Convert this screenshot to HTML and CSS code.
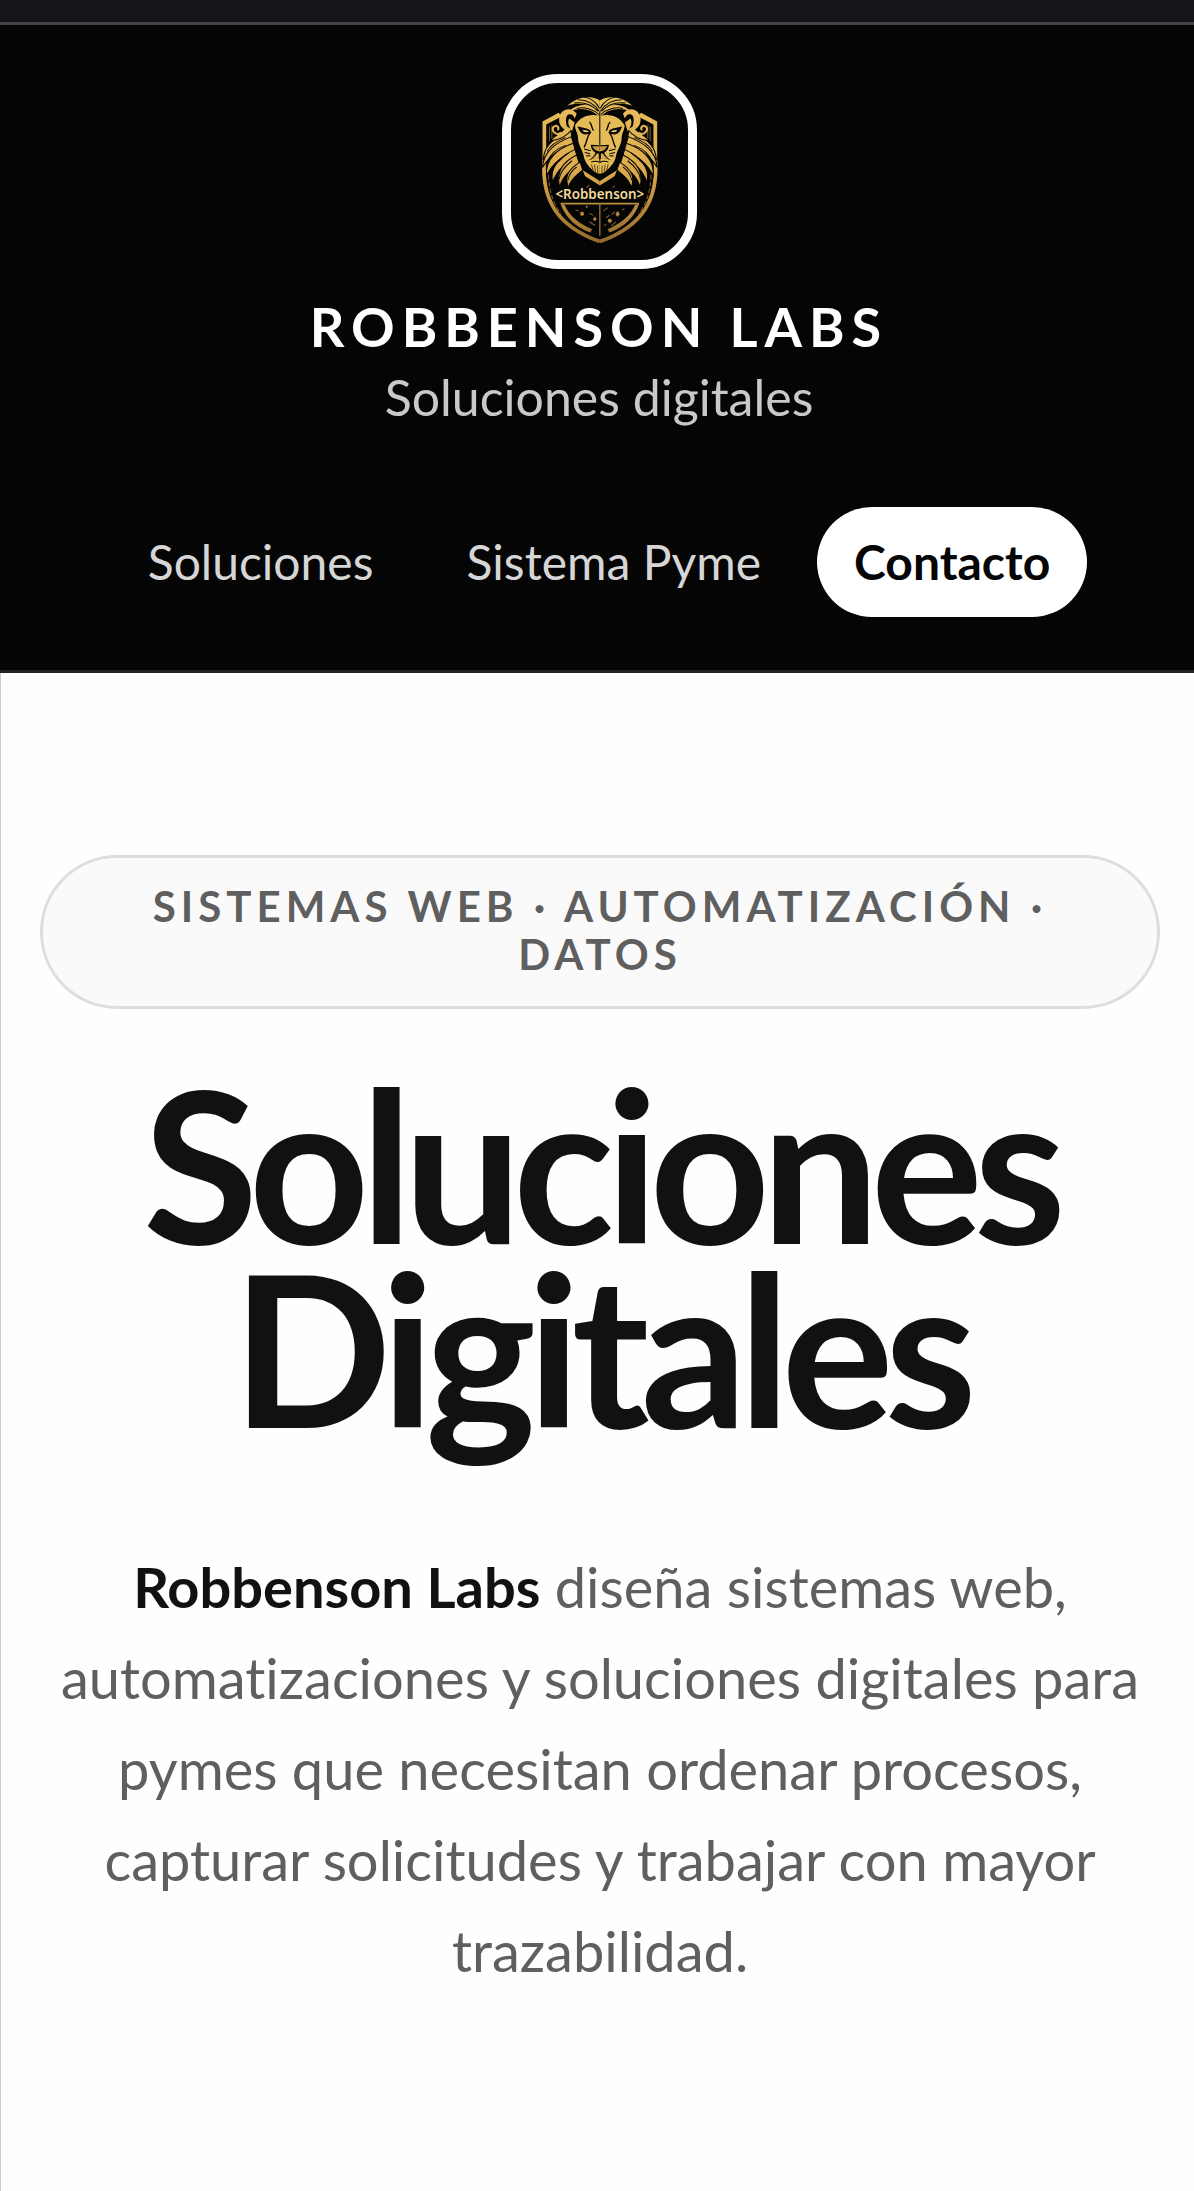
FILE: index.html
```html
<!DOCTYPE html>
<html lang="es">
<head>
  <meta charset="UTF-8">
  <meta name="viewport" content="width=device-width, initial-scale=1.0">
  <title>Robbenson Labs - Soluciones digitales</title>
  <link rel="stylesheet" href="styles.css">
</head>
<body>
  <div class="topbar"></div>

  <header class="header">
    <a href="#inicio" class="brand">
      <span class="brand-logo">
        <svg viewBox="66 66 528 528" role="img" aria-label="Robbenson">
          <defs>
            <linearGradient id="gold" gradientUnits="userSpaceOnUse" x1="0" y1="105" x2="0" y2="545">
              <stop offset="0" stop-color="#e9bf5c"/>
              <stop offset="0.5" stop-color="#dcab4c"/>
              <stop offset="1" stop-color="#94692a"/>
            </linearGradient>
            <!-- Half of the crest, mirrored for the other side -->
            <g id="half">
              <path d="M160 310V181L208 155L218 165L171 190V310Z" fill="url(#gold)"/>
              <path d="M181 196V240M188 192V232" stroke="#80612c" stroke-width="3"/>
              <path d="M165 300C158 410 200 492 331 539" fill="none" stroke="url(#gold)" stroke-width="11"/>
              <path d="M178 340C180 400 200 440 216 456" fill="none" stroke="#80612c" stroke-width="3" stroke-dasharray="14 6"/>
              <path d="M214 426H331" fill="none" stroke="url(#gold)" stroke-width="5"/>
              <path d="M214 426L226 430C240 462 268 486 308 502L302 512C258 496 226 464 214 426Z" fill="url(#gold)"/>
              <g fill="url(#gold)" stroke="#050505" stroke-width="3">
                <path d="M244 206C207 231 166 238 162 296C181 258 213 243 248 228Z"/>
                <path d="M246 226C203 244 163 266 160 318C184 278 215 262 253 249Z"/>
                <path d="M252 246C207 261 167 292 172 343C192 301 222 284 258 268Z"/>
                <path d="M257 264C211 286 181 314 190 362C205 321 230 304 263 285Z"/>
                <path d="M262 281C219 302 200 332 211 376C221 340 246 325 270 307Z"/>
                <path d="M272 302C235 325 226 344 237 378C242 352 268 337 280 325Z"/>
                <path d="M234 192C222 214 196 222 184 238C208 236 232 226 248 204Z"/>
              </g>
              <path d="M229 229C201 240 182 253 174 270M229 252C201 262 182 282 175 300M238 274C210 294 192 312 188 334M248 298C226 315 212 335 210 352M262 316C246 328 238 342 236 356" fill="none" stroke="#050505" stroke-width="3"/>
              <path d="M246 192C226 182 218 160 236 152C246 148 254 154 258 164" fill="none" stroke="#050505" stroke-width="20"/>
              <path d="M262 158C246 136 216 142 210 168C206 192 222 206 240 210C228 192 226 164 238 160C248 157 254 164 256 172Z" fill="url(#gold)"/>
              <path d="M240 172C232 184 240 198 248 210L256 184Z" fill="url(#gold)"/>
              <path d="M216 214C200 226 185 207 193 197C202 188 214 201 204 206" fill="none" stroke="url(#gold)" stroke-width="6"/>
              <path d="M331 118C314 104 266 102 234 134C270 122 303 128 331 158Z" fill="url(#gold)"/>
              <path d="M331 148C300 124 262 127 240 150C278 137 308 145 331 168Z" fill="url(#gold)"/>
              <path d="M284 108C308 112 322 126 330 142M266 116C296 116 316 130 329 150M254 126C284 122 306 130 326 150M262 142C284 136 312 144 328 160" fill="none" stroke="#050505" stroke-width="3"/>
              <path d="M331 164C298 156 272 167 257 192C257 206 264 211 266 229C265 247 280 268 282 280C286 303 298 315 309 325C315 332 322 336 331 337Z" fill="#e5bb58"/>
              <path d="M264 196C275 198 288 200 302 206L304 214C291 224 277 220 270 208Z" fill="#050505"/>
              <path d="M278 207Q290 204 299 211Q287 217 278 207Z" fill="#efca6c"/>
              <path d="M300 182C308 190 306 200 312 208M304 212C292 224 294 240 284 258" fill="none" stroke="#050505" stroke-width="4"/>
              <path d="M304 250L331 252V292C318 286 308 294 296 297C308 291 315 282 318 274C309 268 305 262 304 250Z" fill="#050505"/>
              <path d="M308 255H331V270C320 270 314 264 308 255Z" fill="#c79a43"/>
              <path d="M322 276C318 284 312 289 305 293C314 290 324 288 328 292V276Z" fill="#dcab4c"/>
              <path d="M284 263L304 268M286 273L302 277M290 284L303 283M305 302C316 298 326 300 331 303" fill="none" stroke="#050505" stroke-width="3"/>
              <path d="M306 309L311 327M315 309L318 331M324 312L325 336" stroke="#62461a" stroke-width="3"/>
              <path d="M280 326L331 358V372L287 344Z" fill="url(#gold)"/>
            </g>
          </defs>
          <use href="#half"/>
          <use href="#half" transform="translate(662 0) scale(-1 1)"/>
          <path d="M331 426V522" stroke="#9b7333" stroke-width="4"/>
          <path d="M331 150V250M331 272V300" stroke="#050505" stroke-width="3"/>
          <path d="M258 444L268 448M278 449V463M300 454L311 461M316 464V477M300 480L317 491M342 447L355 438M350 468L360 460M366 459L376 450M384 448V466M397 445L405 441M343 492L351 486M365 492L379 480M291 379L300 370M369 379L376 372" stroke="#80612c" stroke-width="3"/>
          <g fill="#b78740">
            <circle cx="278" cy="456" r="6"/><circle cx="316" cy="472" r="5"/><circle cx="361" cy="477" r="6"/><circle cx="384" cy="457" r="6"/><circle cx="292" cy="435" r="3"/>
          </g>
          <text class="brand-logo-text" x="331" y="413" text-anchor="middle">&lt;Robbenson&gt;</text>
        </svg>
      </span>
      <span class="brand-name">ROBBENSON LABS</span>
      <span class="brand-tagline">Soluciones digitales</span>
    </a>

    <nav class="nav">
      <a href="#soluciones" class="nav-link">Soluciones</a>
      <a href="#pyme" class="nav-link">Sistema Pyme</a>
      <a href="#contacto" class="nav-link nav-link-active">Contacto</a>
    </nav>
  </header>

  <main class="hero" id="inicio">
    <p class="eyebrow">SISTEMAS WEB · AUTOMATIZACIÓN · DATOS</p>
    <h1>Soluciones Digitales</h1>
    <p class="lead">
      <strong>Robbenson Labs</strong> diseña sistemas web, automatizaciones y soluciones digitales para pymes que necesitan ordenar procesos, capturar solicitudes y trabajar con mayor trazabilidad.
    </p>
  </main>
</body>
</html>
```

FILE: styles.css
```css
* {
  margin: 0;
  padding: 0;
  box-sizing: border-box;
}

body {
  font-family: Lato, 'Noto Sans', sans-serif;
  font-variant-ligatures: none;
  background: #fefefe;
  color: #111;
  min-height: 100vh;
  display: flex;
  flex-direction: column;
}

.topbar {
  height: 25px;
  background: #14151a;
  border-bottom: 3px solid #42434a;
}

.header {
  background: #050505;
  border-bottom: 3px solid #222;
  padding: 49px 36px 53px 40px;
  display: flex;
  flex-direction: column;
  align-items: center;
  gap: 76px;
}

.brand {
  display: flex;
  flex-direction: column;
  align-items: center;
  text-decoration: none;
}

.brand-logo {
  width: 195px;
  height: 195px;
  border: 9px solid #fff;
  border-radius: 56px;
  background: #050505;
  overflow: hidden;
  margin-bottom: 22px;
}

.brand-logo svg {
  display: block;
  width: 100%;
  height: 100%;
}

.brand-logo-text {
  font-family: 'Noto Sans', sans-serif;
  font-size: 40px;
  font-weight: 600;
  fill: #f2d99c;
}

.brand-name {
  color: #fff;
  font-size: 54px;
  font-weight: 700;
  line-height: 72px;
  letter-spacing: 7px;
}

.brand-tagline {
  color: #c9c9c9;
  font-size: 50px;
  line-height: 68px;
}

.nav {
  display: flex;
  justify-content: center;
  gap: 19px;
}

.nav-link {
  color: #d6d6d6;
  font-size: 48px;
  line-height: 54px;
  padding: 28px 37px;
  border-radius: 56px;
  text-decoration: none;
}

.nav-link-active {
  background: #fff;
  color: #050505;
  font-weight: 700;
}

.hero {
  flex: 1;
  border-left: 1px solid #ccc;
  padding: 182px 34px 120px 39px;
  text-align: center;
}

.eyebrow {
  background: #fafafa;
  border: 3px solid #ddd;
  border-radius: 77px;
  padding: 24px 56px 28px;
  color: #5f5f5f;
  font-size: 42px;
  font-weight: 700;
  line-height: 48px;
  letter-spacing: 5px;
}

h1 {
  margin-top: 62px;
  font-size: 210px;
  font-weight: 700;
  line-height: 184px;
  letter-spacing: -9px;
}

.lead {
  margin-top: 102px;
  color: #5f5f5f;
  font-size: 56px;
  line-height: 91px;
}

.lead strong {
  color: #111;
  font-weight: 700;
}
```
